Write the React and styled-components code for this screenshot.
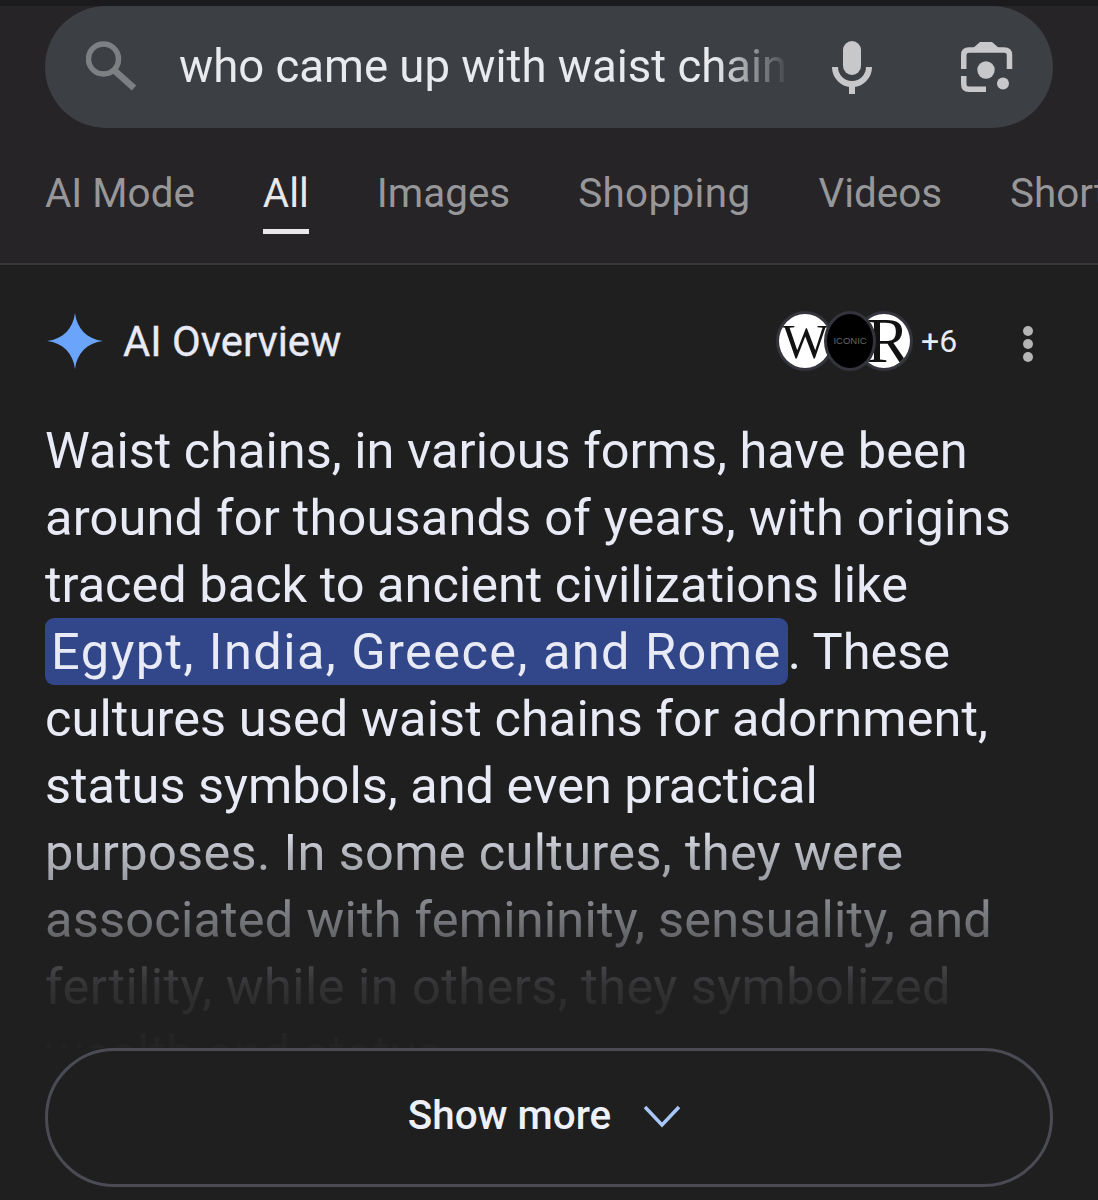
import React from "react";
import styled, { createGlobalStyle } from "styled-components";

const Global = createGlobalStyle`
  html, body { margin: 0; padding: 0; background: #1f1f1f; }
  * { box-sizing: border-box; }
`;
const Page = styled.div`
  width: 1098px; height: 1200px; overflow: hidden; background: #1f1f1f;
  font-family: Roboto, "Liberation Sans", sans-serif; color: #e8eaf0;
`;
const Header = styled.header`
  background: #262426; border-top: 6px solid #1b1b1d; height: 265px;
  border-bottom: 2px solid #38383a; overflow: hidden;
`;
const SearchBar = styled.div`
  margin: 0 45px; width: 1008px; height: 122px; border-radius: 61px; background: #3c3f43;
  display: flex; align-items: center; padding-left: 41px; position: relative;
`;
const Query = styled.div`
  margin: 0 0 2px 39px; width: 610px; font-size: 45.5px; white-space: nowrap; overflow: hidden; color: #e8eaed;
  -webkit-mask-image: linear-gradient(90deg, #000 88%, rgba(0,0,0,.2) 98%, transparent 100%);
  mask-image: linear-gradient(90deg, #000 88%, rgba(0,0,0,.2) 98%, transparent 100%);
`;
const MicWrap = styled.span`display: flex; margin-left: 43px;`;
const LensWrap = styled.span`display: flex; margin-left: 89px;`;
const Tabs = styled.nav`
  display: flex; gap: 68px; padding: 38px 0 0 45px; white-space: nowrap;
`;
const Tab = styled.div`
  height: 68px; font-size: 40.4px; line-height: 56px; flex: none; border-bottom: 5px solid ${p => p.$active ? "#e8e8e8" : "transparent"};
  color: ${p => p.$active ? "#e8e8ea" : "#97979a"}; letter-spacing: ${p => p.$track || 0}px;
`;
const Main = styled.main`padding: 0 45px;`;
const OverviewRow = styled.div`
  height: 152px; display: flex; align-items: center;
`;
const Spark = styled.svg`margin-left: 2px; flex: none;`;
const OverviewTitle = styled.div`margin-left: 20px; font-size: 41.8px; font-weight: 400; -webkit-text-stroke: 0.3px #e8eaf5; color: #e8eaf5; flex: 1;`;
const Avatars = styled.div`display: flex; align-items: center;`;
const Avatar = styled.div`
  width: ${p => p.$w}px; height: 60px; border-radius: 50%; border: 3px solid #33343c; overflow: hidden; flex: none;
  display: flex; align-items: center; justify-content: center; position: relative;
  background: ${p => p.$dark ? "#000" : "#fff"}; color: #111;
  font-family: "Liberation Serif", serif; font-size: ${p => p.$size}px; line-height: 1;
  margin-left: ${p => p.$ml}px; z-index: ${p => p.$dark ? 2 : 1};
  padding-left: ${p => p.$pl || 0}px;
`;
const Tiny = styled.span`font-family: "Liberation Sans", sans-serif; font-size: 9.5px; color: #666;`;
const More = styled.div`font-size: 32px; color: #e8eaf5; width: 36px; margin-left: 8px;`;
const Kebab = styled.div`display: flex; flex-direction: column; gap: 3px; margin: 6px 20px 0 66px;`;
const Dot = styled.i`display: block; width: 10px; height: 10px; border-radius: 50%; background: #b5b5b5;`;
const Copy = styled.div`
  height: 631px; overflow: hidden; font-size: 50.5px; line-height: 67px; color: #e8eaf5; white-space: nowrap;
  -webkit-mask-image: linear-gradient(180deg, #000 65%, rgba(0,0,0,.75) 69%, rgba(0,0,0,.42) 80%, rgba(0,0,0,.1) 90%, rgba(0,0,0,.02) 99%);
  mask-image: linear-gradient(180deg, #000 65%, rgba(0,0,0,.75) 69%, rgba(0,0,0,.42) 80%, rgba(0,0,0,.1) 90%, rgba(0,0,0,.02) 99%);
`;
const Line = styled.div`letter-spacing: ${p => p.$track || 0}px;`;
const Mark = styled.span`
  background: #32478a; border-radius: 9px; padding: 4px 6px; letter-spacing: 1.43px;
`;
const ShowMore = styled.button`
  display: flex; width: 1008px; height: 139px; align-items: center; justify-content: center; gap: 32px;
  background: #1f1f1f; border: 3px solid #4a4b55; border-radius: 70px; color: #eef0f8;
  font: 500 40.4px Roboto, "Liberation Sans", sans-serif; padding: 0 9px 4px 0;
`;

const SearchIcon = () => (
  <svg width="54" height="52" viewBox="0 0 54 52" fill="none" stroke="#7d8083">
    <circle cx="17.5" cy="18" r="15" strokeWidth="5.5" />
    <path d="M29 30 L48 47" strokeWidth="6.5" />
  </svg>
);
const MicIcon = () => (
  <svg width="40" height="53" viewBox="0 0 40 53">
    <rect x="11" y="0" width="18" height="34" rx="9" fill="#c8c8ca" />
    <path d="M3 26 A17 17 0 0 0 37 26" fill="none" stroke="#c8c8ca" strokeWidth="6" />
    <rect x="17" y="42" width="6" height="11" fill="#c8c8ca" />
  </svg>
);
const LensIcon = () => (
  <svg width="52" height="52" viewBox="0 0 52 52">
    <path d="M2.75 28 V14 Q2.75 9 8 9 H43 Q48.5 9 48.5 14 V28" fill="none" stroke="#c8c8ca" strokeWidth="5.5" />
    <path d="M19 1 H31 L39 8 H11 Z" fill="#c8c8ca" />
    <path d="M2.75 35 V43 Q2.75 48.25 8 48.25 H25" fill="none" stroke="#c8c8ca" strokeWidth="5.5" />
    <circle cx="25" cy="29" r="8.7" fill="#c8c8ca" />
    <circle cx="42" cy="42.5" r="6" fill="#c8c8ca" />
  </svg>
);
const SparkIcon = () => (
  <Spark width="56" height="56" viewBox="0 0 56 56">
    <path d="M28 0 C30 16 40 26 56 28 C40 30 30 40 28 56 C26 40 16 30 0 28 C16 26 26 16 28 0 Z" fill="#6ba4fb" />
  </Spark>
);
const Chevron = () => (
  <svg width="38" height="24" viewBox="0 0 38 24" fill="none">
    <path d="M2 3 L19 21 L36 3" stroke="#a8c7fa" strokeWidth="3.5" />
  </svg>
);

export default function App() {
  return (
    <Page>
      <Global />
      <Header>
        <SearchBar>
          <SearchIcon />
          <Query>who came up with waist chain</Query>
          <MicWrap><MicIcon /></MicWrap>
          <LensWrap><LensIcon /></LensWrap>
        </SearchBar>
        <Tabs>
          <Tab>AI Mode</Tab>
          <Tab $active>All</Tab>
          <Tab>Images</Tab>
          <Tab $track={0.35}>Shopping</Tab>
          <Tab>Videos</Tab>
          <Tab>Shorts</Tab>
        </Tabs>
      </Header>
      <Main>
        <OverviewRow>
          <SparkIcon />
          <OverviewTitle>AI Overview</OverviewTitle>
          <Avatars>
            <Avatar $w={58} $ml={0} $size={49}>W</Avatar>
            <Avatar $dark $w={52} $ml={-10} $size={10}><Tiny>ICONIC</Tiny></Avatar>
            <Avatar $w={58} $ml={-21} $size={64} $pl={8}>R</Avatar>
          </Avatars>
          <More>+6</More>
          <Kebab><Dot /><Dot /><Dot /></Kebab>
        </OverviewRow>
        <Copy>
          <Line>Waist chains, in various forms, have been</Line>
          <Line $track={0.2}>around for thousands of years, with origins</Line>
          <Line>traced back to ancient civilizations like</Line>
          <Line><Mark>Egypt, India, Greece, and Rome</Mark>. These</Line>
          <Line $track={0.1}>cultures used waist chains for adornment,</Line>
          <Line>status symbols, and even practical</Line>
          <Line $track={0.33}>purposes. In some cultures, they were</Line>
          <Line $track={0.22}>associated with femininity, sensuality, and</Line>
          <Line $track={0.45}>fertility, while in others, they symbolized</Line>
          <Line>wealth and status.</Line>
        </Copy>
        <ShowMore>Show more <Chevron /></ShowMore>
      </Main>
    </Page>
  );
}
